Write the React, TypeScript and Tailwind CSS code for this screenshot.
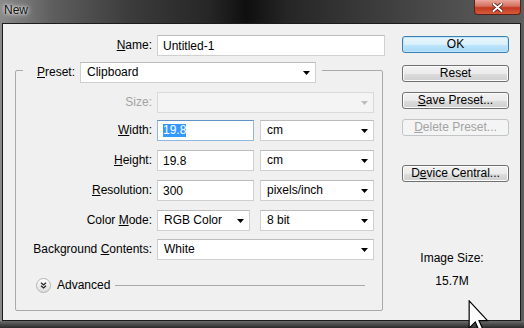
import React from 'react'

function Caret({ disabled }: { disabled?: boolean }) {
  return (
    <svg width="7" height="4" viewBox="0 0 7 4" className="shrink-0">
      <path d="M0 0h7L3.5 4z" fill={disabled ? '#bdbdbd' : '#000'} />
    </svg>
  )
}

function Select({ value, w, disabled }: { value?: string; w: string; disabled?: boolean }) {
  return (
    <div
      className={`${w} h-[21px] flex items-center justify-between pl-[6px] pr-[5px] border ${
        disabled
          ? 'bg-[#f4f4f4] border-[#d9d9d9]'
          : 'bg-white border-[#d0d0d0] border-t-[#bcbcbc]'
      }`}
    >
      <span className="leading-[15px] whitespace-nowrap">{value}</span>
      <Caret disabled={disabled} />
    </div>
  )
}

function TextBox({ children, w, focused }: { children: React.ReactNode; w: string; focused?: boolean }) {
  return (
    <div
      className={`${w} h-[21px] flex items-center pl-[5px] bg-white border ${
        focused ? 'border-[#92b8e0] border-t-[#5f91c6]' : 'border-[#d0d0d0] border-t-[#bcbcbc]'
      }`}
    >
      {children}
    </div>
  )
}

function Label({ children, w, disabled }: { children: React.ReactNode; w: string; disabled?: boolean }) {
  return (
    <div className={`${w} text-right leading-[15px] whitespace-nowrap ${disabled ? 'text-[#a3a3a3]' : ''}`}>
      {children}
    </div>
  )
}

function Btn({ children, mt, primary, disabled }: { children: React.ReactNode; mt: string; primary?: boolean; disabled?: boolean }) {
  const skin = disabled
    ? 'border-[#c2c5c8] bg-[#f4f4f4] text-[#a3a3a3]'
    : primary
      ? 'border-[#3c7fb1] bg-[linear-gradient(#eaf6fd_0%,#d9f0fc_50%,#bee6fd_51%,#a7d9f5_100%)] shadow-[inset_0_0_0_1px_#bfe6fd]'
      : 'border-[#707070] bg-[linear-gradient(#f2f2f2_0%,#ebebeb_50%,#dddddd_51%,#cfcfcf_100%)] shadow-[inset_0_0_0_1px_#fcfcfc]'
  return (
    <div className={`${mt} w-[107px] h-[17px] rounded-[3px] border flex items-center justify-center leading-[15px] ${skin}`}>
      {children}
    </div>
  )
}

export default function App() {
  return (
    <div className="relative w-[524px] h-[328px] overflow-hidden flex flex-col bg-[linear-gradient(90deg,#8a8a8a_0%,#5e5e5e_10%,#3b3b3b_25%,#262626_40%,#0f0f0f_47%,#262626_55%,#3a3a3a_70%,#4d4d4d_85%,#5e5e5e_100%)] font-['Liberation_Sans',Arial,sans-serif] text-[12px] text-black">
      {/* title bar */}
      <div className="h-[23px] shrink-0 flex justify-between items-start">
        <div className="pl-[4px] pt-[3px] leading-[15px] text-[#111] [text-shadow:0_0_6px_#ffffff,0_0_3px_#ffffff]">New</div>
        <div className="mr-[3px] w-[47px] h-[15px] rounded-b-[4px] border border-t-0 border-[#5b2118] bg-[linear-gradient(#e9a99c_0%,#d46f5c_45%,#c2381f_55%,#d65c3a_100%)] flex items-center justify-center">
          <svg width="11" height="9" viewBox="0 0 11 9">
            <path d="M1.5 1l8 7M9.5 1l-8 7" stroke="#4a1a12" strokeWidth="3.6" strokeLinecap="round" />
            <path d="M1.5 1l8 7M9.5 1l-8 7" stroke="#fff" strokeWidth="2" strokeLinecap="round" />
          </svg>
        </div>
      </div>

      {/* dialog body */}
      <div className="ml-[2px] mr-[3px] h-[298px] shrink-0 border border-[#1c1c1c] bg-[#f0f0f0] flex">
        <div className="w-[387px] pt-[11px]">
          <div className="flex items-center gap-[5px] h-[21px]">
            <Label w="w-[149px]"><span className="underline">N</span>ame:</Label>
            <TextBox w="w-[228px]">Untitled-1</TextBox>
          </div>

          <div className="mt-[14px] ml-[12px] w-[368px] h-[241px] border border-[#a9a9a9] rounded-[2px]">
            <div className="-mt-[9px] ml-[7px] w-fit bg-[#f0f0f0] pl-[14px] pr-[6px] flex items-center gap-[5px]">
              <span className="leading-[15px]"><span className="underline">P</span>reset:</span>
              <Select value="Clipboard" w="w-[236px]" />
            </div>

            <div className="mt-[9px] flex items-center gap-[5px]">
              <Label w="w-[136px]" disabled>Size:</Label>
              <Select w="w-[217px]" disabled />
            </div>
            <div className="mt-[7px] flex items-center gap-[5px]">
              <Label w="w-[136px]"><span className="underline">W</span>idth:</Label>
              <TextBox w="w-[97px]" focused>
                <span className="bg-[#3399ff] text-white leading-[13px]">19.8</span>
              </TextBox>
              <div className="ml-[1px]"><Select value="cm" w="w-[114px]" /></div>
            </div>
            <div className="mt-[9px] flex items-center gap-[5px]">
              <Label w="w-[136px]"><span className="underline">H</span>eight:</Label>
              <TextBox w="w-[97px]">19.8</TextBox>
              <div className="ml-[1px]"><Select value="cm" w="w-[114px]" /></div>
            </div>
            <div className="mt-[9px] flex items-center gap-[5px]">
              <Label w="w-[136px]"><span className="underline">R</span>esolution:</Label>
              <TextBox w="w-[97px]">300</TextBox>
              <div className="ml-[1px]"><Select value="pixels/inch" w="w-[114px]" /></div>
            </div>
            <div className="mt-[9px] flex items-center gap-[5px]">
              <Label w="w-[136px]">Color <span className="underline">M</span>ode:</Label>
              <Select value="RGB Color" w="w-[93px]" />
              <div className="ml-[5px]"><Select value="8 bit" w="w-[114px]" /></div>
            </div>
            <div className="mt-[8px] flex items-center gap-[5px]">
              <Label w="w-[136px]">Background <span className="underline">C</span>ontents:</Label>
              <Select value="White" w="w-[217px]" />
            </div>

            <div className="mt-[17px] h-[16px] flex items-center">
              <div className="ml-[20px] w-[15px] h-[15px] rounded-full border border-[#b4b4b4] bg-[linear-gradient(#ffffff,#dcdcdc)] flex items-center justify-center">
                <svg width="7" height="7" viewBox="0 0 7 7">
                  <path d="M1 0.8l2.5 2.2L6 0.8M1 3.8l2.5 2.2L6 3.8" stroke="#222" strokeWidth="1.3" fill="none" />
                </svg>
              </div>
              <span className="ml-[6px] leading-[15px]">Advanced</span>
              <div className="flex-1 ml-[5px] mr-[17px] h-px bg-[#a9a9a9]" />
            </div>
          </div>
        </div>

        <div className="ml-[12px] pt-[12px] flex flex-col">
          <Btn mt="mt-0" primary>OK</Btn>
          <Btn mt="mt-[12px]">Reset</Btn>
          <Btn mt="mt-[10px]"><span className="underline">S</span>ave Preset...</Btn>
          <Btn mt="mt-[10px]" disabled><span className="underline">D</span>elete Preset...</Btn>
          <Btn mt="mt-[29px]">D<span className="underline">e</span>vice Central...</Btn>
          <div className="mt-[69px] w-[107px] pr-[7px] text-center leading-[15px]">Image Size:</div>
          <div className="mt-[8px] w-[107px] pr-[7px] text-center leading-[15px]">15.7M</div>
        </div>
      </div>
      <div className="flex-1 bg-[linear-gradient(#6a6a6a,#2a2a2a)]" />

      {/* mouse pointer */}
      <svg className="absolute left-[468px] top-[300px]" width="21" height="34" viewBox="0 0 12 20">
        <path d="M0.5 0.5v16l3.6-3.6 2.6 6 2.2-1-2.6-5.8h5z" fill="#fff" stroke="#000" strokeWidth="0.7" strokeLinejoin="miter" />
      </svg>
    </div>
  )
}
